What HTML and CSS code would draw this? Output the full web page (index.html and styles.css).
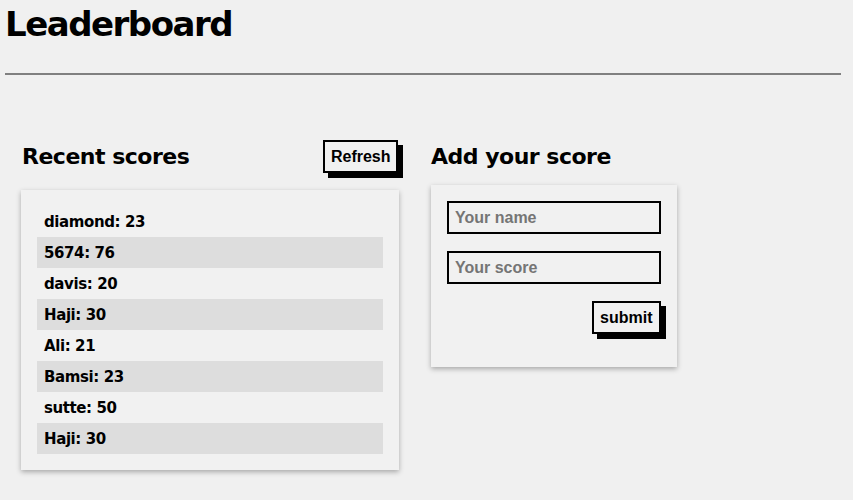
FILE: index.html
```html
<!DOCTYPE html>
<html lang="en">
<head>
<meta charset="utf-8">
<title>Leaderboard</title>
<link rel="stylesheet" href="styles.css">
</head>
<body>
<header class="top">
  <h1 class="title">Leaderboard</h1>
  <hr class="rule">
</header>
<main class="board">
  <section class="col col-scores">
    <div class="col-head">
      <h2 class="col-title">Recent scores</h2>
      <button class="btn" type="button">Refresh</button>
    </div>
    <div class="card card-scores">
      <ul class="scores">
        <li class="score">diamond: 23</li>
        <li class="score">5674: 76</li>
        <li class="score">davis: 20</li>
        <li class="score">Haji: 30</li>
        <li class="score">Ali: 21</li>
        <li class="score">Bamsi: 23</li>
        <li class="score">sutte: 50</li>
        <li class="score">Haji: 30</li>
      </ul>
    </div>
  </section>
  <section class="col col-add">
    <div class="col-head">
      <h2 class="col-title">Add your score</h2>
    </div>
    <form class="card card-form">
      <input class="field" type="text" placeholder="Your name">
      <input class="field" type="text" placeholder="Your score">
      <div class="form-actions">
        <button class="btn btn-submit" type="button">submit</button>
      </div>
    </form>
  </section>
</main>
</body>
</html>
```
FILE: styles.css
```css
html, body {
  margin: 0;
  padding: 0;
  background: #f0f0f0;
}
body {
  font-family: "DejaVu Sans", Verdana, sans-serif;
  color: #000;
  padding: 0 12px 30px 5px;
}
.title {
  margin: 0;
  padding-top: 3px;
  font-size: 34px;
  letter-spacing: -1.5px;
  line-height: 42px;
  font-weight: bold;
}
.rule {
  margin: 28px 0 0 0;
  border: 0;
  height: 2px;
  background: #808080;
}
.board {
  display: flex;
  align-items: flex-start;
  gap: 32px;
  padding: 65px 0 0 16px;
}
.col-scores { width: 378px; }
.col-add { width: 246px; }
.col-head {
  display: flex;
  align-items: center;
  justify-content: space-between;
  height: 32px;
}
.col-title {
  margin: 0;
  font-size: 22px;
  letter-spacing: -0.5px;
  font-weight: bold;
  padding-left: 1px;
}
.col-add .col-title { padding-left: 0; }
.btn {
  font-family: "Liberation Sans", Arial, sans-serif;
  font-weight: bold;
  font-size: 16px;
  line-height: 18px;
  color: #000;
  background: #f1f1f1;
  border: 2px solid #000;
  border-radius: 0;
  padding: 6px 5.5px 5px 5.5px;
  box-shadow: 5px 5px 0 #000;
  margin: 0;
}
.btn-submit { padding: 6px 6.5px 5px 6.5px; }
.col-scores .btn { margin-right: 1px; align-self: flex-start; }
.card {
  background: #f1f1f1;
  box-shadow: 0 2px 5px rgba(0, 0, 0, 0.3);
  padding: 16px;
}
.card-scores { margin-top: 18px; }
.card-form {
  margin-top: 13px;
  padding: 16px 16px 33px 16px;
  display: flex;
  flex-direction: column;
  gap: 17px;
}
.scores {
  list-style: none;
  margin: 0;
  padding: 0;
}
.score {
  height: 31px;
  line-height: 33px;
  padding-left: 7px;
  font-size: 15px;
  letter-spacing: -0.4px;
  font-weight: bold;
}
.score:nth-child(even) { background: #dddddd; }
.field {
  display: block;
  box-sizing: border-box;
  width: 214px;
  height: 33px;
  margin: 0;
  border: 2px solid #000;
  background: #f1f1f1;
  padding: 0 6px;
  font-family: "Liberation Sans", Arial, sans-serif;
  font-weight: bold;
  font-size: 16px;
  color: #000;
  outline: none;
}
.field::placeholder { color: #757575; }
.form-actions {
  display: flex;
  justify-content: flex-end;
  width: 214px;
}
```
